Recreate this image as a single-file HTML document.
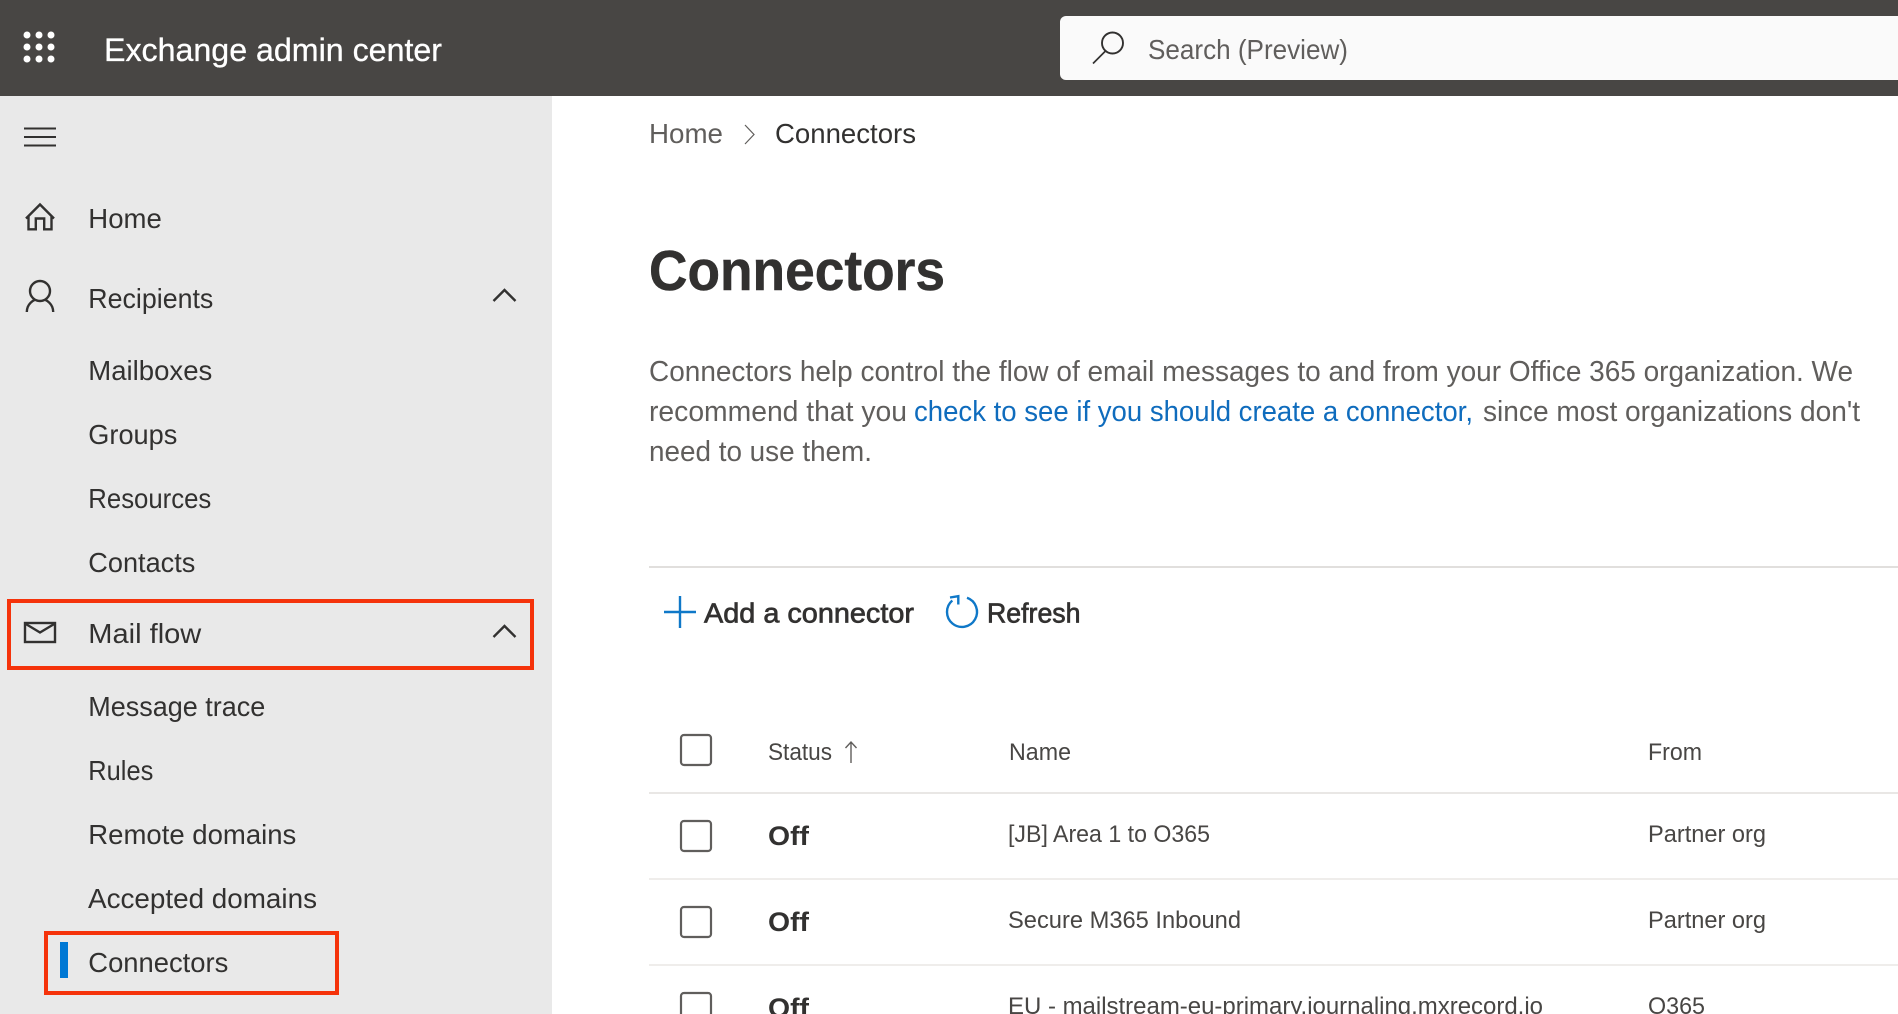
<!DOCTYPE html>
<html lang="en">
<head>
<meta charset="utf-8">
<title>Exchange admin center</title>
<style>
html,body{margin:0;padding:0;width:1898px;height:1014px;overflow:hidden;background:#fff}
svg{display:block}
text{font-family:"Liberation Sans",sans-serif;white-space:pre}
.nav{font-size:28px;fill:#323130}
.p{font-size:28.5px;fill:#605e5c}
.th{font-size:24px;fill:#484644}
.td{font-size:24.5px;fill:#484644}
.off{font-size:27px;font-weight:bold;fill:#323130}
.semi{font-size:28px;fill:#323130;stroke:#323130;stroke-width:.7}
.cb{fill:#fff;stroke:#605e5c;stroke-width:2.2}
.ic{fill:none;stroke:#323130;stroke-width:2.4}
</style>
</head>
<body>
<svg width="1898" height="1014" viewBox="0 0 1898 1014" xmlns="http://www.w3.org/2000/svg">
<rect x="0" y="0" width="1898" height="1014" fill="#fff"/>
<!-- header -->
<rect x="0" y="0" width="1898" height="96" fill="#484644"/>
<g fill="#fff">
<circle cx="27" cy="35" r="3.5"/><circle cx="39" cy="35" r="3.5"/><circle cx="51" cy="35" r="3.5"/>
<circle cx="27" cy="47" r="3.5"/><circle cx="39" cy="47" r="3.5"/><circle cx="51" cy="47" r="3.5"/>
<circle cx="27" cy="59" r="3.5"/><circle cx="39" cy="59" r="3.5"/><circle cx="51" cy="59" r="3.5"/>
</g>
<text x="104" y="61" font-size="32" fill="#fff" stroke="#fff" stroke-width=".3" textLength="338" lengthAdjust="spacingAndGlyphs">Exchange admin center</text>
<rect x="1060" y="16" width="860" height="64" rx="6" fill="#fafafa"/>
<circle cx="1112.5" cy="43" r="10.5" fill="none" stroke="#323130" stroke-width="1.9"/>
<path d="M1105.5 51L1093 63.5" fill="none" stroke="#323130" stroke-width="1.7"/>
<text x="1148" y="59" font-size="28" fill="#605e5c" textLength="200" lengthAdjust="spacingAndGlyphs">Search (Preview)</text>

<!-- sidebar -->
<rect x="0" y="96" width="552" height="918" fill="#e9e9e9"/>
<path d="M24 128.5H56M24 137H56M24 145.5H56" fill="none" stroke="#323130" stroke-width="2"/>
<path d="M26 218.5L40 204.5L54 218.5M28.5 216V229.3H35.8V218.5H44.2V229.3H51.5V216" class="ic"/>
<path d="M26.8 312A13.2 13.2 0 0 1 53.2 312" class="ic"/>
<circle cx="40" cy="291" r="10" fill="#e9e9e9" stroke="#323130" stroke-width="2.4"/>
<path d="M493.5 301L504.5 290L515.5 301" class="ic"/>
<rect x="25" y="623" width="30" height="19" class="ic"/>
<path d="M25 623.5L40 632.5L55 623.5" class="ic"/>
<path d="M493.5 637L504.5 626L515.5 637" class="ic"/>

<text class="nav" x="88.3" y="228" textLength="73.5" lengthAdjust="spacingAndGlyphs">Home</text>
<text class="nav" x="88.3" y="308" textLength="125" lengthAdjust="spacingAndGlyphs">Recipients</text>
<text class="nav" x="88.3" y="380" textLength="124" lengthAdjust="spacingAndGlyphs">Mailboxes</text>
<text class="nav" x="88.3" y="444" textLength="89" lengthAdjust="spacingAndGlyphs">Groups</text>
<text class="nav" x="88.3" y="508" textLength="123" lengthAdjust="spacingAndGlyphs">Resources</text>
<text class="nav" x="88.3" y="572" textLength="107" lengthAdjust="spacingAndGlyphs">Contacts</text>
<text class="nav" x="88.3" y="643" textLength="113" lengthAdjust="spacingAndGlyphs">Mail flow</text>
<text class="nav" x="88.3" y="716" textLength="177" lengthAdjust="spacingAndGlyphs">Message trace</text>
<text class="nav" x="88.3" y="780" textLength="65" lengthAdjust="spacingAndGlyphs">Rules</text>
<text class="nav" x="88.3" y="844" textLength="208" lengthAdjust="spacingAndGlyphs">Remote domains</text>
<text class="nav" x="88" y="908" textLength="229" lengthAdjust="spacingAndGlyphs">Accepted domains</text>
<text class="nav" x="88.3" y="972" textLength="140" lengthAdjust="spacingAndGlyphs">Connectors</text>
<rect x="60" y="942" width="8" height="36" fill="#0078d4"/>
<rect x="9" y="601" width="523" height="67" fill="none" stroke="#f5330b" stroke-width="4"/>
<rect x="46" y="933" width="291" height="60" fill="none" stroke="#f5330b" stroke-width="4"/>

<!-- main -->
<text x="649" y="143" font-size="28" fill="#605e5c" textLength="74" lengthAdjust="spacingAndGlyphs">Home</text>
<path d="M745 125L754 134.5L745 144" fill="none" stroke="#605e5c" stroke-width="1.2"/>
<text x="775" y="143" font-size="28" fill="#323130" textLength="141" lengthAdjust="spacingAndGlyphs">Connectors</text>
<text x="649" y="290" font-size="57" font-weight="bold" fill="#323130" stroke="#323130" stroke-width=".5" textLength="296" lengthAdjust="spacingAndGlyphs">Connectors</text>

<text class="p" x="649" y="381" textLength="1204" lengthAdjust="spacingAndGlyphs">Connectors help control the flow of email messages to and from your Office 365 organization. We</text>
<text class="p" x="649" y="421" textLength="258" lengthAdjust="spacingAndGlyphs">recommend that you</text>
<text class="p" x="914" y="421" style="fill:#0f6cbd" textLength="559" lengthAdjust="spacingAndGlyphs">check to see if you should create a connector,</text>
<text class="p" x="1483" y="421" textLength="377" lengthAdjust="spacingAndGlyphs">since most organizations don't</text>
<text class="p" x="649" y="461" textLength="223" lengthAdjust="spacingAndGlyphs">need to use them.</text>

<rect x="649" y="566" width="1249" height="2" fill="#e1dfdd"/>

<!-- toolbar -->
<path d="M664 612H696M680 596V628" fill="none" stroke="#0f78c8" stroke-width="2.4"/>
<text class="semi" x="704" y="622.7" textLength="210" lengthAdjust="spacingAndGlyphs">Add a connector</text>
<path d="M952.3 600.5A15 15 0 1 0 967 597.8" fill="none" stroke="#0f78c8" stroke-width="2.4"/>
<path d="M950 597.5L958.3 596.2V604.5" fill="none" stroke="#0f78c8" stroke-width="2.4"/>
<text class="semi" x="987" y="622.7" textLength="93.5" lengthAdjust="spacingAndGlyphs">Refresh</text>

<!-- table -->
<rect class="cb" x="681" y="735" width="30" height="30" rx="3"/>
<text class="th" x="768" y="760" textLength="64" lengthAdjust="spacingAndGlyphs">Status</text>
<path d="M851 763V742M845.5 748L851 742L856.5 748" fill="none" stroke="#605e5c" stroke-width="1.4"/>
<text class="th" x="1009" y="760" textLength="62" lengthAdjust="spacingAndGlyphs">Name</text>
<text class="th" x="1648" y="760" textLength="54" lengthAdjust="spacingAndGlyphs">From</text>
<rect x="649" y="792" width="1249" height="2" fill="#e9e7e5"/>

<rect class="cb" x="681" y="821" width="30" height="30" rx="3"/>
<text class="off" x="768" y="845" textLength="41" lengthAdjust="spacingAndGlyphs">Off</text>
<text class="td" x="1008" y="842" textLength="202" lengthAdjust="spacingAndGlyphs">[JB] Area 1 to O365</text>
<text class="td" x="1648" y="842" textLength="118" lengthAdjust="spacingAndGlyphs">Partner org</text>
<rect x="649" y="878" width="1249" height="2" fill="#efedeb"/>

<rect class="cb" x="681" y="907" width="30" height="30" rx="3"/>
<text class="off" x="768" y="931" textLength="41" lengthAdjust="spacingAndGlyphs">Off</text>
<text class="td" x="1008" y="928" textLength="233" lengthAdjust="spacingAndGlyphs">Secure M365 Inbound</text>
<text class="td" x="1648" y="928" textLength="118" lengthAdjust="spacingAndGlyphs">Partner org</text>
<rect x="649" y="964" width="1249" height="2" fill="#efedeb"/>

<rect class="cb" x="681" y="993" width="30" height="30" rx="3"/>
<text class="off" x="768" y="1017" textLength="41" lengthAdjust="spacingAndGlyphs">Off</text>
<text class="td" x="1008" y="1014" textLength="535" lengthAdjust="spacingAndGlyphs">EU - mailstream-eu-primary.journaling.mxrecord.io</text>
<text class="td" x="1648" y="1014" textLength="57" lengthAdjust="spacingAndGlyphs">O365</text>
</svg>
</body>
</html>
